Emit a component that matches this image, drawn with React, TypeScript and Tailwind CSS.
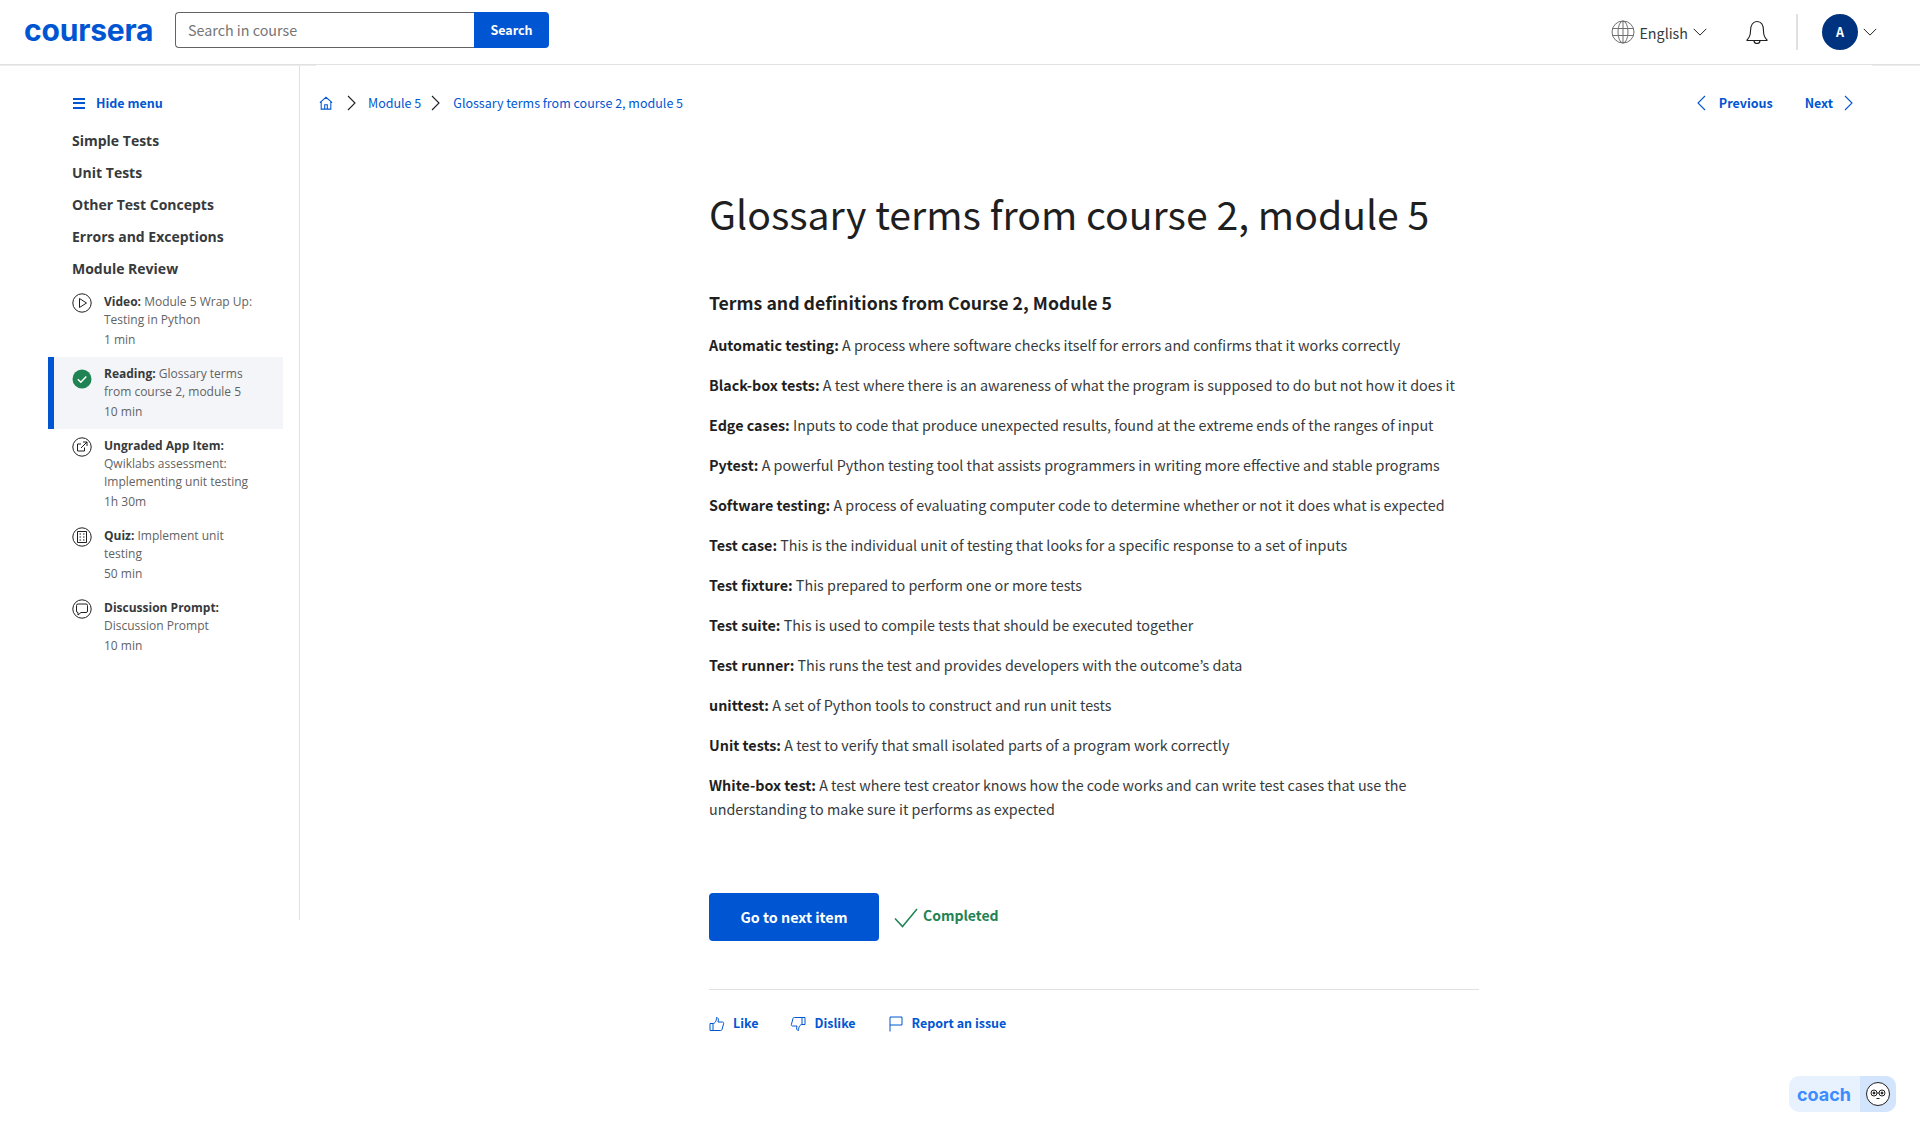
import React from "react";

const SANS = "font-['Noto_Sans_CJK_JP','Liberation_Sans',sans-serif]";

const Chevron = ({ dir, className }: { dir: "left" | "right" | "down"; className?: string }) => {
  const d = dir === "left" ? "M11 2 4 9l7 7" : dir === "right" ? "M6 2l7 7-7 7" : "M2 5.5l7 7 7-7";
  return (
    <svg viewBox="0 0 18 18" fill="none" stroke="currentColor" strokeWidth="1.1" className={className}>
      <path d={d} />
    </svg>
  );
};

const RingIcon = ({ children }: { children: React.ReactNode }) => (
  <svg viewBox="0 0 20 20" fill="none" stroke="#1f1f1f" strokeWidth="1" className="w-5 h-5 shrink-0">
    <circle cx="10" cy="10" r="9.2" />
    {children}
  </svg>
);

const THUMB = "M1 7.500h3v7H1zM4 7.500c2 0 3.500-2.500 3.500-6 1.500 0 2.500 1.500 1.500 4.500h4.500c1 0 1.500 1 1 2l-1.500 5.500c-.3 1-1 1-2 1H4";

const Terms = [
  ["Automatic testing:", "A process where software checks itself for errors and confirms that it works correctly"],
  ["Black-box tests:", "A test where there is an awareness of what the program is supposed to do but not how it does it"],
  ["Edge cases:", "Inputs to code that produce unexpected results, found at the extreme ends of the ranges of input"],
  ["Pytest:", "A powerful Python testing tool that assists programmers in writing more effective and stable programs"],
  ["Software testing:", "A process of evaluating computer code to determine whether or not it does what is expected"],
  ["Test case:", "This is the individual unit of testing that looks for a specific response to a set of inputs"],
  ["Test fixture:", "This prepared to perform one or more tests"],
  ["Test suite:", "This is used to compile tests that should be executed together"],
  ["Test runner:", "This runs the test and provides developers with the outcome’s data"],
  ["unittest:", "A set of Python tools to construct and run unit tests"],
  ["Unit tests:", "A test to verify that small isolated parts of a program work correctly"],
  ["White-box test:", "A test where test creator knows how the code works and can write test cases that use the understanding to make sure it performs as expected"],
];

const SideItem = ({
  icon,
  label,
  title,
  time,
  active,
}: {
  icon: React.ReactNode;
  label: string;
  title: string;
  time: string;
  active?: boolean;
}) => (
  <div className={`flex gap-3 pr-4 pt-2 pb-2 text-[12px] leading-[18px] text-[#636363] ${active ? "bg-[#f3f5f8] border-l-[6px] border-[#0056d2] pl-[18px]" : "pl-6"}`}>
    <div className={active ? "pt-1" : ""}>{icon}</div>
    <div className="w-[152px]">
      <div>
        <span className="font-bold text-[#373a3c]">{label}</span> {title}
      </div>
      <div className="mt-[2px]">{time}</div>
    </div>
  </div>
);

export default function App() {
  return (
    <div className={`w-[1920px] h-[1136px] bg-white relative overflow-hidden ${SANS}`}>
      <header className="h-[65px] border-b border-[#e1e1e1] flex items-center pl-6 pr-[42px]">
        <div className="w-[151px] text-[#0056d2] text-[30px] leading-[30px] font-bold tracking-[-0.2px] font-['Inter',sans-serif] -mt-[4px]">
          coursera
        </div>
        <div className="flex h-9 -mt-[4px]">
          <div className="w-[300px] h-9 border border-[#636363] rounded-l-[4px] border-r-0 flex items-center pl-[12px] text-[14.3px] text-[#757575]">
            Search in course
          </div>
          <div className="w-[75px] bg-[#0056d2] text-white rounded-r-[4px] flex items-center justify-center text-[12.5px] font-bold ml-[-1px]">
            Search
          </div>
        </div>
        <div className="ml-auto flex items-center h-9 text-[#373a3c]">
          <svg viewBox="0 0 24 24" fill="none" stroke="#6f6f6f" strokeWidth="1" className="w-6 h-6">
            <circle cx="12" cy="12" r="11" />
            <ellipse cx="12" cy="12" rx="5" ry="11" />
            <path d="M12 1v22M1.500 8.500h21M1.500 15.500h21" />
          </svg>
          <span className="text-[14.3px] ml-[4px] mt-[1px]">English</span>
          <Chevron dir="down" className="w-4 h-4 ml-[4px] text-[#1f1f1f]" />
          <svg viewBox="0 0 24 24" fill="none" stroke="#1f1f1f" strokeWidth="1.1" className="w-6 h-6 ml-[37px]">
            <path d="M2 20c2-2 3.500-3.500 3.500-9C5.500 5 8 1.500 12 1.500S18.500 5 18.500 11c0 5.500 1.500 7 3.500 9v.5H2zM9 20.500c0 2 1.300 3 3 3s3-1 3-3" />
          </svg>
          <div className="w-[2px] h-9 bg-[#e1e1e1] ml-[27px]" />
          <div className="w-9 h-9 rounded-full bg-[#00337f] text-white text-[12.5px] font-bold flex items-center justify-center ml-[24px]">
            A
          </div>
          <Chevron dir="down" className="w-4 h-4 ml-[4px] text-[#1f1f1f]" />
        </div>
      </header>

      <div className="absolute left-0 top-[65px] w-[316px] h-px bg-[#ececec]" />
      <div className="absolute right-0 top-[65px] w-[48px] h-px bg-[#ececec]" />

      <div className="flex">
        <aside className="w-[300px] h-[855px] border-r border-[#e1e1e1] pl-[48px] pr-[16px] shrink-0 font-['Open_Sans',sans-serif]">
          <div className={`flex items-center h-5 mt-[28px] pl-[25px] text-[12.5px] text-[#0056d2] font-bold ${SANS}`}>
            <span className="w-[12px] h-[11px] border-y-2 border-[#0056d2] flex items-center">
              <span className="w-full h-[2px] bg-[#0056d2]" />
            </span>
            <span className="ml-[11px]">Hide menu</span>
          </div>
          <div className="mt-[12px] pl-6 text-[14px] leading-[32px] font-bold text-[#373a3c]">
            <div>Simple Tests</div>
            <div>Unit Tests</div>
            <div>Other Test Concepts</div>
            <div>Errors and Exceptions</div>
            <div>Module Review</div>
          </div>
          <div>
            <SideItem
              icon={
                <RingIcon>
                  <path d="M7.500 5.500v9l7-4.500z" />
                </RingIcon>
              }
              label="Video:"
              title="Module 5 Wrap Up: Testing in Python"
              time="1 min"
            />
            <SideItem
              active
              icon={
                <svg viewBox="0 0 20 20" className="w-5 h-5 shrink-0">
                  <circle cx="10" cy="10" r="9.500" fill="#1f8354" />
                  <path d="M5.800 10.300l3 3 5.500-5.800" fill="none" stroke="#fff" strokeWidth="1.500" />
                </svg>
              }
              label="Reading:"
              title="Glossary terms from course 2, module 5"
              time="10 min"
            />
            <SideItem
              icon={
                <RingIcon>
                  <path d="M12.500 10.500v3.500h-7V7h3.500M9 11l6-6M11 5h4v4" />
                </RingIcon>
              }
              label="Ungraded App Item:"
              title="Qwiklabs assessment: Implementing unit testing"
              time="1h 30m"
            />
            <SideItem
              icon={
                <RingIcon>
                  <path d="M5.500 4.500h9v11h-9zM7.500 7h1.500M11 7h1.500M7.500 10h1.500M11 10h1.500M7.500 13h1.500M11 13h1.500" />
                </RingIcon>
              }
              label="Quiz:"
              title="Implement unit testing"
              time="50 min"
            />
            <SideItem
              icon={
                <RingIcon>
                  <path d="M6 5h8a1.500 1.500 0 0 1 1.500 1.500v5.500a1.500 1.500 0 0 1-1.500 1.500H9l-3 2.500V13.500A1.500 1.500 0 0 1 4.500 12V6.500A1.500 1.500 0 0 1 6 5z" />
                </RingIcon>
              }
              label="Discussion Prompt:"
              title="Discussion Prompt"
              time="10 min"
            />
          </div>
        </aside>

        <main className="flex-1 min-w-0 pr-[63px]">
          <div className="flex items-center h-5 mt-[28px] text-[12.5px] text-[#0056d2] pl-[19px]">
            <svg viewBox="0 0 16 16" fill="none" stroke="#0056d2" strokeWidth="1.200" className="w-[14px] h-[14px]">
              <path d="M1 7.500 8 1.500l7 6M2.500 6.500v8.500h11V6.500M6.500 15v-5h3v5" />
            </svg>
            <Chevron dir="right" className="w-[18px] h-[18px] ml-[9px] text-[#1f1f1f]" />
            <span className="ml-[8px]">Module 5</span>
            <Chevron dir="right" className="w-[18px] h-[18px] ml-[5px] text-[#1f1f1f]" />
            <span className="ml-[9px]">Glossary terms from course 2, module 5</span>
            <div className="ml-auto flex items-center font-bold">
              <Chevron dir="left" className="w-[18px] h-[18px]" />
              <span className="ml-[7px]">Previous</span>
              <span className="ml-[32px]">Next</span>
              <Chevron dir="right" className="w-[18px] h-[18px] ml-[6px]" />
            </div>
          </div>

          <div className="ml-[409px] w-[770px]">
            <h1 className="mt-[72px] text-[39.2px] leading-[56px] font-normal text-[#1f1f1f]">
              Glossary terms from course 2, module 5
            </h1>
            <h2 className="mt-[48px] text-[17.7px] leading-[26px] font-bold text-[#1f1f1f]">
              Terms and definitions from Course 2, Module 5
            </h2>
            <div className="mt-[18px] text-[14.33px] leading-[24px] text-[#373a3c]">
              {Terms.map(([term, def]) => (
                <p key={term} className="mb-4">
                  <strong className="font-bold text-[#1f1f1f]">{term}</strong> {def}
                </p>
              ))}
            </div>
            <div className="flex items-start mt-[72px]">
              <button className="w-[170px] h-12 rounded-[4px] bg-[#0056d2] text-white text-[14.33px] font-bold">
                Go to next item
              </button>
              <svg viewBox="0 0 24 24" fill="none" stroke="#1f8354" strokeWidth="1.500" className="w-6 h-6 ml-[15px] mt-[13px]">
                <path d="M1 12.500l7.500 8L23 3" />
              </svg>
              <span className="ml-[5px] mt-[12px] text-[14px] leading-5 font-bold text-[#1f8354]">Completed</span>
            </div>
            <div className="mt-[48px] border-t border-[#e1e1e1] pt-[24px] flex items-center h-[44px] text-[12.5px] font-bold text-[#0056d2]">
              <svg viewBox="0 0 16 16" fill="none" stroke="#0056d2" strokeWidth="1" className="w-4 h-4">
                <path d={THUMB} />
              </svg>
              <span className="ml-[8px]">Like</span>
              <svg viewBox="0 0 16 16" fill="none" stroke="#0056d2" strokeWidth="1" className="w-4 h-4 ml-[32px] rotate-180">
                <path d={THUMB} />
              </svg>
              <span className="ml-[8px]">Dislike</span>
              <svg viewBox="0 0 16 16" fill="none" stroke="#0056d2" strokeWidth="1" className="w-4 h-4 ml-[32px]">
                <path d="M2 15.500V1h12v8H2" />
              </svg>
              <span className="ml-[8px]">Report an issue</span>
            </div>
          </div>
        </main>
      </div>

      <div className="absolute left-[1789px] top-[1076px] w-[107px] h-9 rounded-[10px] bg-[#e8f1fe] flex items-center overflow-hidden">
        <span className="flex-1 pl-[8px] text-[#3b8cff] text-[18px] font-bold font-['Inter',sans-serif]">coach</span>
        <span className="w-9 h-9 bg-[#d3e4fd] flex items-center justify-center">
          <svg viewBox="0 0 24 24" className="w-6 h-6" fill="none" stroke="#1f1f1f" strokeWidth="1">
            <circle cx="12" cy="12" r="11.500" fill="#fff" />
            <circle cx="8" cy="11" r="3" />
            <circle cx="16" cy="11" r="3" />
            <circle cx="8" cy="11" r="1" fill="#1f1f1f" />
            <circle cx="16" cy="11" r="1" fill="#1f1f1f" />
            <path d="M11 11h2M10.500 16.500h3" />
          </svg>
        </span>
      </div>
    </div>
  );
}
